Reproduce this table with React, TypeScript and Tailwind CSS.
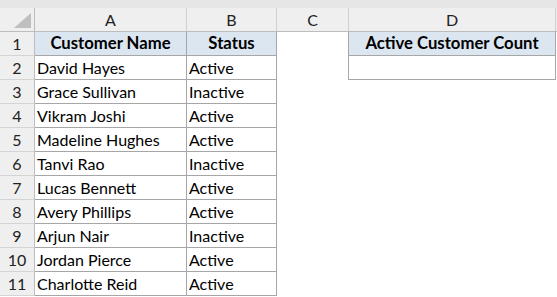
import React from "react";

const rows: [string, string][] = [
  ["David Hayes", "Active"],
  ["Grace Sullivan", "Inactive"],
  ["Vikram Joshi", "Active"],
  ["Madeline Hughes", "Active"],
  ["Tanvi Rao", "Inactive"],
  ["Lucas Bennett", "Active"],
  ["Avery Phillips", "Active"],
  ["Arjun Nair", "Inactive"],
  ["Jordan Pierce", "Active"],
  ["Charlotte Reid", "Active"],
];

export default function App() {
  return (
    <div
      className="w-[557px] h-[297px] bg-white overflow-hidden text-[16px] text-black"
      style={{ fontFamily: "Lato, 'Liberation Sans', sans-serif" }}
    >
      <div className="h-[8px] bg-[#e6e6e6]" />
      {/* column header row */}
      <div className="flex h-[24px] bg-[#efefef] border-b border-[#bdbdbd] text-[#222]">
        <div className="w-[35px] border-r border-[#bdbdbd] relative">
          <svg className="absolute left-[14px] top-[5px]" width="17" height="15" viewBox="0 0 17 15">
            <polygon points="17,0 17,15 0,15" fill="#bfbfbf" />
          </svg>
        </div>
        <div className="w-[152px] border-r border-[#d0d0d0] flex items-center justify-center pt-[1px]">A</div>
        <div className="w-[90px] border-r border-[#d0d0d0] flex items-center justify-center pt-[1px]">B</div>
        <div className="w-[72px] border-r border-[#d0d0d0] flex items-center justify-center pt-[1px]">C</div>
        <div className="w-[207px] border-r border-[#d0d0d0] flex items-center justify-center pt-[1px]">D</div>
      </div>
      {/* row 1 */}
      <div className="flex h-[24px]">
        <div className="w-[35px] bg-[#efefef] border-r border-b border-[#bdbdbd] border-b-[#d4d4d4] flex items-center justify-center text-[#222] pt-[1px]">1</div>
        <div className="w-[152px] bg-[#dce6f1] border-r border-b border-[#a6a6a6] flex items-center justify-center font-bold text-[16.7px] pt-[1px]">Customer Name</div>
        <div className="w-[90px] bg-[#dce6f1] border-r border-b border-[#a6a6a6] flex items-center justify-center font-bold text-[16.7px] pt-[1px]">Status</div>
        <div className="w-[72px] border-r border-[#a6a6a6]" />
        <div className="w-[207px] bg-[#dce6f1] border-r border-b border-[#a6a6a6] flex items-center justify-center font-bold text-[16.7px] pt-[1px]">Active Customer Count</div>
      </div>
      {rows.map(([name, status], i) => (
        <div key={i} className="flex h-[24px]">
          <div className="w-[35px] bg-[#efefef] border-r border-b border-[#bdbdbd] border-b-[#d4d4d4] flex items-center justify-center text-[#222] pt-[1px]">
            {i + 2}
          </div>
          <div className="w-[152px] border-r border-b border-[#a6a6a6] flex items-center pl-[2px] pt-[1px]">{name}</div>
          <div className="w-[90px] border-r border-b border-[#a6a6a6] flex items-center pl-[2px] pt-[1px]">{status}</div>
          <div className={i === 0 ? "w-[72px] border-r border-[#a6a6a6]" : "w-[72px]"} />
          {i === 0 ? <div className="w-[207px] border-r border-b border-[#a6a6a6]" /> : null}
        </div>
      ))}
    </div>
  );
}
